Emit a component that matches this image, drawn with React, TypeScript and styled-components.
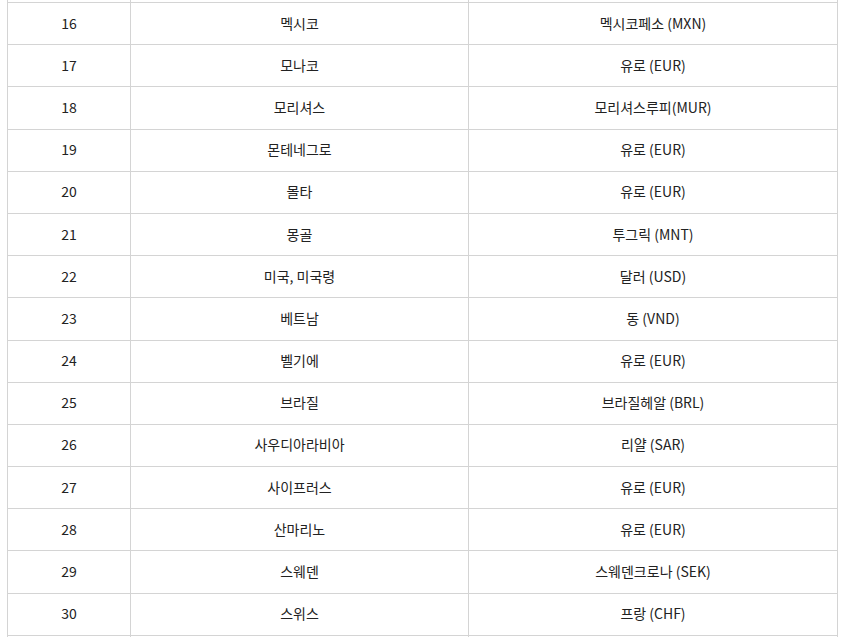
import React from 'react';
import styled, { createGlobalStyle } from 'styled-components';

const rows: [number, string, string][] = [
    [16, '멕시코', '멕시코페소 (MXN)'],
    [17, '모나코', '유로 (EUR)'],
    [18, '모리셔스', '모리셔스루피(MUR)'],
    [19, '몬테네그로', '유로 (EUR)'],
    [20, '몰타', '유로 (EUR)'],
    [21, '몽골', '투그릭 (MNT)'],
    [22, '미국, 미국령', '달러 (USD)'],
    [23, '베트남', '동 (VND)'],
    [24, '벨기에', '유로 (EUR)'],
    [25, '브라질', '브라질헤알 (BRL)'],
    [26, '사우디아라비아', '리얄 (SAR)'],
    [27, '사이프러스', '유로 (EUR)'],
    [28, '산마리노', '유로 (EUR)'],
    [29, '스웨덴', '스웨덴크로나 (SEK)'],
    [30, '스위스', '프랑 (CHF)'],
]

const GlobalStyle = createGlobalStyle`
    html, body {
        margin:0;
        padding:0;
        background:#fff;
        overflow:hidden;
        height:637px;
    }
    body{
        font-family:"Noto Sans CJK KR", "Noto Sans", sans-serif;
        color:#222;
    }
`

const App = () => {
    return (
        <Page>
            <GlobalStyle />
            <Table>
                <Row edge>
                    <Cell /><Cell /><Cell />
                </Row>
                {rows.map(([no, country, currency]) => (
                    <Row key={no}>
                        <Cell>{no}</Cell>
                        <Cell>{country}</Cell>
                        <Cell>{currency}</Cell>
                    </Row>
                ))}
                <Row edge>
                    <Cell /><Cell /><Cell />
                </Row>
            </Table>
        </Page>
    )
}

export default App

const Page = styled.div`
    width:852px;
    height:637px;
    overflow:hidden;
    padding-left:7px;
    box-sizing:border-box;
`

const Table = styled.div`
    display:flex;
    flex-direction:column;
    width:831px;
    border-left:1px solid #d4d4d4;
    box-sizing:border-box;
`

const Row = styled.div<{ edge?: boolean }>`
    display:grid;
    grid-template-columns:123px 338px 369px;
    height:${props => (props.edge ? '3px' : '42.2px')};
    flex-shrink:0;
`

const Cell = styled.div`
    display:flex;
    align-items:center;
    justify-content:center;
    border-right:1px solid #d4d4d4;
    border-bottom:1px solid #d4d4d4;
    padding-bottom:2px;
    box-sizing:border-box;
    font-size:14px;
    line-height:1;
    overflow:hidden;
`
